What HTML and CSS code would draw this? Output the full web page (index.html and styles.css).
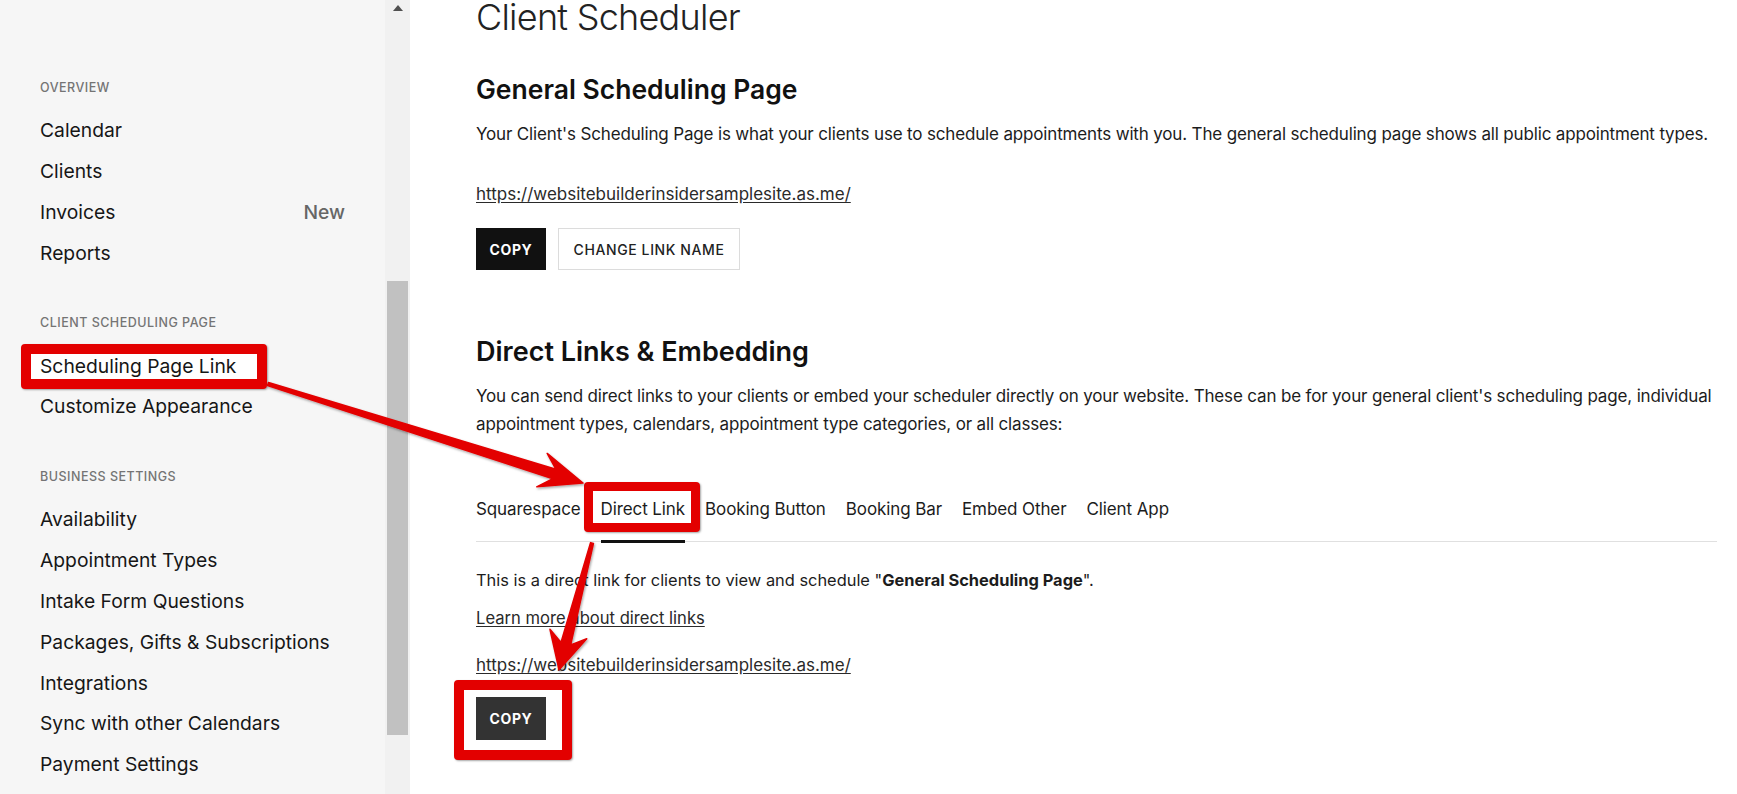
FILE: index.html
```html
<!DOCTYPE html>
<html lang="en">
<head>
<meta charset="utf-8">
<title>Client Scheduler</title>
<link rel="stylesheet" href="styles.css">
</head>
<body>
<div class="app">
  <aside class="sidebar">
    <nav class="nav">
      <section class="group">
        <h3 class="group-label">OVERVIEW</h3>
        <ul class="items">
          <li class="item">Calendar</li>
          <li class="item">Clients</li>
          <li class="item"><span>Invoices</span><span class="badge">New</span></li>
          <li class="item">Reports</li>
        </ul>
      </section>
      <section class="group">
        <h3 class="group-label">CLIENT SCHEDULING PAGE</h3>
        <ul class="items">
          <li class="item item-marked">Scheduling Page Link</li>
          <li class="item">Customize Appearance</li>
        </ul>
      </section>
      <section class="group">
        <h3 class="group-label">BUSINESS SETTINGS</h3>
        <ul class="items">
          <li class="item">Availability</li>
          <li class="item">Appointment Types</li>
          <li class="item">Intake Form Questions</li>
          <li class="item">Packages, Gifts &amp; Subscriptions</li>
          <li class="item">Integrations</li>
          <li class="item">Sync with other Calendars</li>
          <li class="item">Payment Settings</li>
        </ul>
      </section>
    </nav>
    <div class="scrollbar">
      <div class="scroll-up"></div>
      <div class="thumb"></div>
    </div>
  </aside>

  <main class="main">
    <h1 class="title">Client Scheduler</h1>

    <section class="block">
      <h2 class="heading">General Scheduling Page</h2>
      <p class="para">Your Client's Scheduling Page is what your clients use to schedule appointments with you. The general scheduling page shows all public appointment types.</p>
      <a class="url url-first" href="#">https://websitebuilderinsidersamplesite.as.me/</a>
      <div class="actions">
        <button class="btn btn-dark">COPY</button>
        <button class="btn btn-outline">CHANGE LINK NAME</button>
      </div>
    </section>

    <section class="block block-embed">
      <h2 class="heading">Direct Links &amp; Embedding</h2>
      <p class="para">You can send direct links to your clients or embed your scheduler directly on your website. These can be for your general client's scheduling page, individual appointment types, calendars, appointment type categories, or all classes:</p>

      <ul class="tabs">
        <li class="tab">Squarespace</li>
        <li class="tab tab-active"><span class="mark-tab">Direct Link</span></li>
        <li class="tab">Booking Button</li>
        <li class="tab">Booking Bar</li>
        <li class="tab">Embed Other</li>
        <li class="tab">Client App</li>
      </ul>

      <div class="panel">
        <p class="note">This is a direct link for clients to view and schedule "<strong>General Scheduling Page</strong>".</p>
        <a class="learn" href="#">Learn more about direct links</a>
        <a class="url url-second" href="#">https://websitebuilderinsidersamplesite.as.me/</a>
        <div class="actions actions-second">
          <span class="mark-copy"><button class="btn btn-grey">COPY</button></span>
        </div>
      </div>
    </section>
  </main>
</div>

<svg class="annotations" width="1737" height="794" viewBox="0 0 1737 794" aria-hidden="true">
  <defs>
    <filter id="arrowShadow" x="-10%" y="-10%" width="120%" height="120%">
      <feDropShadow dx="1" dy="1.5" stdDeviation="1" flood-color="#000" flood-opacity="0.35"/>
    </filter>
  </defs>
  <polygon class="arrow" filter="url(#arrowShadow)" points="268.45,382.57 555.85,469.23 547.19,453.4 583,483 536.69,486.8 552.85,478.77 267.55,385.43"/>
  <polygon class="arrow" filter="url(#arrowShadow)" points="593.45,543.38 570.68,644.93 586.75,638.78 559.05,669.8 549.97,629.22 561,642.41 590.55,542.62"/>
</svg>
</body>
</html>
```

FILE: styles.css
```css
*,
*::before,
*::after {
  box-sizing: border-box;
}

html, body {
  margin: 0;
  padding: 0;
  height: 100%;
}

body {
  font-family: Inter, "Noto Sans", "Liberation Sans", sans-serif;
  color: #1c1c1c;
  background: #ffffff;
  overflow: hidden;
  position: relative;
}

.app {
  display: flex;
  height: 794px;
}

/* ---------- Sidebar ---------- */
.sidebar {
  display: flex;
  flex: 0 0 410px;
  height: 100%;
  background: #f6f6f6;
}

.nav {
  flex: 1 1 auto;
  padding: 80px 40px 0 40px;
}

.group + .group {
  margin-top: 42px;
}

.group-label {
  margin: 0 0 14.2px 0;
  font-size: 12.5px;
  line-height: 16px;
  font-weight: 500;
  letter-spacing: 0.5px;
  color: #747474;
}

.items {
  list-style: none;
  margin: 0;
  padding: 0;
}

.item {
  display: flex;
  justify-content: space-between;
  font-size: 19.3px;
  line-height: 40.8px;
  font-weight: 400;
  color: #161616;
}

.badge {
  color: #666666;
  font-weight: 500;
}

.item-marked {
  position: relative;
  z-index: 0;
}

.item-marked::before {
  content: "";
  position: absolute;
  z-index: -1;
  left: -19px;
  width: 246px;
  top: -2px;
  height: 45px;
  border: 10px solid #e30000;
  border-radius: 4px;
  background: #ffffff;
  box-shadow: 1px 1px 2px rgba(0, 0, 0, 0.35);
}

.scrollbar {
  flex: 0 0 25px;
  background: #f1f1f1;
  display: flex;
  flex-direction: column;
  align-items: center;
  padding-top: 5px;
}

.scroll-up {
  width: 0;
  height: 0;
  border-left: 5.5px solid transparent;
  border-right: 5.5px solid transparent;
  border-bottom: 6px solid #505050;
}

.thumb {
  margin-top: 270px;
  width: 21px;
  height: 454px;
  background: #c1c1c1;
}

/* ---------- Main ---------- */
.main {
  flex: 1 1 auto;
  padding: 0 20px 0 66px;
  background: #ffffff;
}

.title {
  margin: 0;
  font-size: 36px;
  line-height: 34px;
  font-weight: 300;
  letter-spacing: -0.75px;
  color: #222222;
}

.block {
  display: flex;
  flex-direction: column;
  align-items: flex-start;
}

.heading {
  margin: 39px 0 0 0;
  font-size: 26.5px;
  line-height: 32px;
  font-weight: 600;
  letter-spacing: 0;
  color: #111111;
}

.para {
  margin: 15px 0 0 0;
  font-size: 17px;
  line-height: 28px;
  letter-spacing: -0.16px;
  color: #1c1c1c;
}

.url {
  color: #2a2a2a;
  font-size: 17px;
  line-height: 28px;
  text-decoration: underline;
  text-underline-offset: 2px;
}

.url-first {
  margin-top: 32px;
}

.actions {
  display: flex;
  gap: 12px;
  margin-top: 20px;
}

.btn {
  height: 42px;
  padding: 0;
  font-family: inherit;
  font-size: 14px;
  letter-spacing: 0.6px;
  white-space: nowrap;
  border: 0;
  border-radius: 0;
  display: inline-flex;
  align-items: center;
  justify-content: center;
}

.btn-dark {
  background: #111111;
  color: #ffffff;
  font-weight: 700;
  width: 70px;
}

.btn-outline {
  background: #ffffff;
  color: #222222;
  border: 1px solid #dcdcdc;
  font-weight: 500;
  width: 182px;
}

.btn-grey {
  background: #333333;
  color: #ffffff;
  font-weight: 700;
  width: 70px;
  height: 43px;
}

.block-embed .heading {
  margin-top: 66px;
  font-size: 27px;
}

.block-embed .para {
  margin-top: 14px;
}

.tabs {
  list-style: none;
  margin: 59px 0 0 0;
  padding: 0;
  display: flex;
  gap: 20px;
  align-self: stretch;
  border-bottom: 1px solid #e0e0e0;
}

.tab {
  position: relative;
  font-size: 17px;
  line-height: 24px;
  letter-spacing: -0.1px;
  padding-bottom: 20px;
  color: #1c1c1c;
}

.tab-active::after {
  content: "";
  position: absolute;
  left: 0;
  right: 0;
  bottom: -2px;
  height: 3px;
  background: #111111;
}

.mark-tab {
  position: relative;
  z-index: 0;
  display: inline-block;
}

.mark-tab::before {
  content: "";
  position: absolute;
  z-index: -1;
  left: -17px;
  right: -15px;
  top: -14.8px;
  bottom: -11.2px;
  border: 9px solid #e30000;
  border-radius: 4px;
  background: #ffffff;
  box-shadow: 1px 1px 2px rgba(0, 0, 0, 0.35);
}

.panel {
  display: flex;
  flex-direction: column;
  align-items: flex-start;
}

.note {
  margin: 24px 0 0 0;
  font-size: 16.4px;
  line-height: 28px;
  color: #1c1c1c;
}

.note strong {
  font-weight: 700;
}

.learn {
  margin-top: 10px;
  font-size: 16.6px;
  line-height: 28px;
  color: #2a2a2a;
  text-decoration: underline;
  text-underline-offset: 2px;
}

.url-second {
  margin-top: 19px;
}

.actions-second {
  margin-top: 18px;
}

.mark-copy {
  position: relative;
  z-index: 0;
  display: inline-flex;
}

.mark-copy::before {
  content: "";
  position: absolute;
  z-index: -1;
  left: -22px;
  right: -26px;
  top: -17px;
  bottom: -20px;
  border: 10px solid #e30000;
  border-radius: 4px;
  background: #ffffff;
  box-shadow: 1px 1px 2px rgba(0, 0, 0, 0.35);
}

/* ---------- Annotation arrows ---------- */
.annotations {
  position: absolute;
  left: 0;
  top: 0;
  pointer-events: none;
}

.arrow {
  fill: #e30000;
  stroke: #e30000;
  stroke-width: 1.5;
  stroke-linejoin: round;
}
```
